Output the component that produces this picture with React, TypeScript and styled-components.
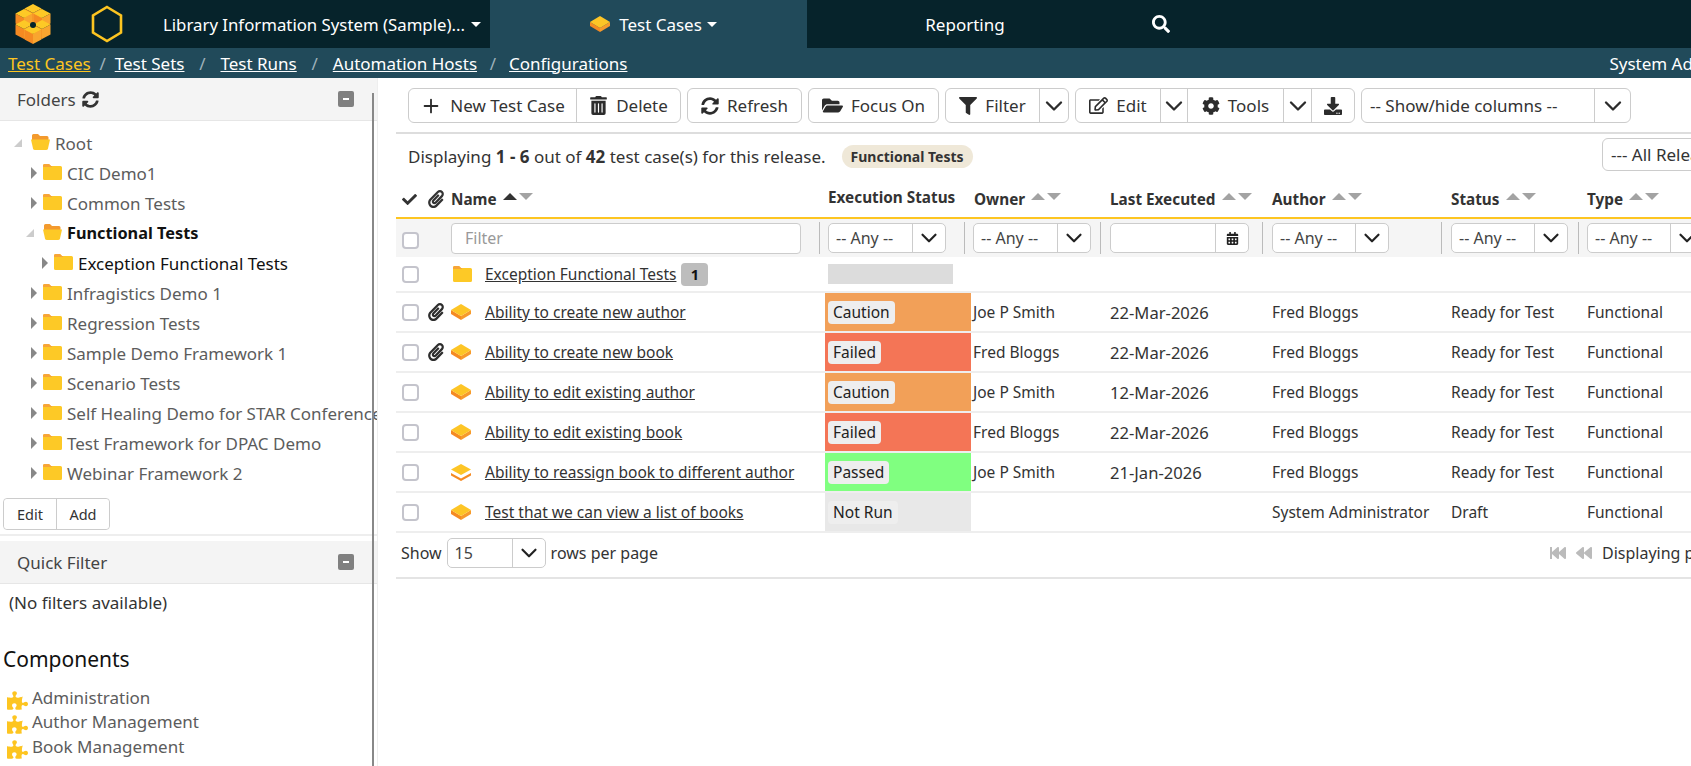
import React from 'react';
import styled, { createGlobalStyle } from 'styled-components';
import { ChevronDown, Plus } from 'lucide-react';
import {
  FaBackward,
  FaCalendarAlt,
  FaCheck,
  FaCog,
  FaDownload,
  FaFastBackward,
  FaFilter,
  FaFolderOpen,
  FaPaperclip,
  FaPuzzlePiece,
  FaRegEdit,
  FaSearch,
  FaSyncAlt,
  FaTrashAlt,
} from 'react-icons/fa';

const FONT = '"Noto Sans", "Open Sans", sans-serif';

const GlobalStyle = createGlobalStyle`
  html, body {
    margin: 0;
    padding: 0;
    height: 100%;
    overflow: hidden;
    background: #fff;
    font-family: ${FONT};
    font-size: 17px;
    color: #333;
  }
  * { box-sizing: border-box; }
`;

const Page = styled.div`
  width: 1691px;
  height: 766px;
  display: flex;
  flex-direction: column;
  overflow: hidden;
`;

/* top navigation */
const TopBar = styled.header`
  height: 48px;
  flex: none;
  display: flex;
  align-items: center;
  background: #06232b;
  color: #fff;
`;

const LogoSlot = styled.div`
  width: 91px;
  padding-left: 15px;
  display: flex;
  align-items: center;
`;

const HexSlot = styled.div`
  width: 72px;
  display: flex;
  align-items: center;
`;

const ProductName = styled.div`
  width: 327px;
  display: flex;
  align-items: center;
  gap: 6px;
  font-size: 16.8px;
  white-space: nowrap;
`;

const Caret = styled.span`
  display: inline-block;
  border-left: 5px solid transparent;
  border-right: 5px solid transparent;
  border-top: 5px solid #fff;
`;

const ActiveTab = styled.div`
  width: 317px;
  height: 48px;
  background: #214a5a;
  display: flex;
  align-items: center;
  justify-content: center;
  gap: 9px;
  padding-left: 10px;
`;

const TabCaret = styled(Caret)`
  margin-left: -4px;
`;

const PlainTab = styled.div`
  width: 316px;
  text-align: center;
`;

const SearchSlot = styled.div`
  margin-left: 29px;
  display: flex;
  font-size: 18px;
`;

/* breadcrumb style sub navigation */
const SubNav = styled.nav`
  height: 30px;
  flex: none;
  display: flex;
  align-items: center;
  background: #214a5a;
  padding-left: 8px;
  color: #fff;
  overflow: hidden;
  white-space: nowrap;
`;

const SubLink = styled.a<{ $active?: boolean }>`
  color: ${(p) => (p.$active ? '#fdc521' : '#fff')};
  text-decoration: underline;
`;

const Slash = styled.span<{ $w: number }>`
  width: ${(p) => p.$w}px;
  text-align: center;
  color: #9fb2ba;
`;

const UserName = styled.span`
  margin-left: auto;
  margin-right: -91px;
`;

const Body = styled.div`
  flex: 1;
  display: flex;
  min-height: 0;
`;

/* left column */
const Sidebar = styled.aside`
  width: 378px;
  flex: none;
  position: relative;
  border-right: 1px solid #eee;
  overflow: hidden;

  &::after {
    content: '';
    position: absolute;
    top: 15px;
    bottom: 0;
    left: 372px;
    width: 2px;
    background: #888;
  }
`;

const PanelHead = styled.div`
  height: 43px;
  display: flex;
  align-items: center;
  gap: 6px;
  padding: 0 23px 0 17px;
  background: #f4f4f4;
  border-bottom: 1px solid #e6e6e6;
  color: #444;
`;

const Collapse = styled.span`
  margin-left: auto;
  width: 16px;
  height: 16px;
  border-radius: 2px;
  background: #808080;
  display: flex;
  align-items: center;
  justify-content: center;

  &::before {
    content: '';
    width: 6px;
    height: 2px;
    background: #fff;
  }
`;

const Tree = styled.ul`
  list-style: none;
  margin: 0;
  padding: 7px 0 0;
`;

const TreeRow = styled.li<{ $indent: number; $bold?: boolean; $dark?: boolean }>`
  height: 30px;
  display: flex;
  align-items: center;
  padding-left: ${(p) => p.$indent}px;
  white-space: nowrap;
  font-weight: ${(p) => (p.$bold ? 700 : 400)};
  font-size: ${(p) => (p.$bold ? 16.3 : 17)}px;
  color: ${(p) => (p.$bold || p.$dark ? '#111' : '#5c5c5c')};
`;

const Twisty = styled.span<{ $open?: boolean }>`
  width: 17px;
  flex: none;
  display: flex;

  &::before {
    content: '';
    display: block;
    ${(p) =>
      p.$open
        ? `border-left: 8px solid transparent; border-bottom: 8px solid #ccc;`
        : `margin-left: 5px; border-top: 6px solid transparent; border-bottom: 6px solid transparent; border-left: 6px solid #888;`}
  }
`;

const TreeFolder = styled.span`
  display: flex;
  margin: -3px 5px 0 0;
`;

const TreeActions = styled.div`
  height: 48px;
  padding: 10px 0 0 3px;
  border-bottom: 2px solid #eee;
`;

const TreeButtons = styled.div`
  display: flex;
  width: 107px;
  height: 32px;
  border: 1px solid #ccc;
  border-radius: 4px;
`;

const TreeButton = styled.button`
  flex: 1;
  font: inherit;
  font-size: 14.5px;
  color: #333;
  background: #fff;
  border: 0;
  border-radius: 4px;
  padding: 0;

  & + & {
    border-left: 1px solid #ccc;
    border-radius: 0 4px 4px 0;
  }
`;

const QuickHead = styled(PanelHead)`
  margin-top: 5px;
`;

const NoFilters = styled.div`
  padding: 7px 9px 0;
  height: 59px;
  color: #333;
`;

const ComponentsTitle = styled.h3`
  margin: 0 0 10px 3px;
  font-weight: 400;
  font-size: 21px;
  line-height: 32px;
  color: #111;
`;

const ComponentItem = styled.div`
  height: 24.5px;
  display: flex;
  align-items: center;
  gap: 4px;
  padding-left: 7px;
  color: #5c5c5c;

  svg {
    color: #fdc521;
    margin-top: 6px;
    font-size: 21px;
  }
`;

/* main column */
const Main = styled.main`
  flex: 1;
  min-width: 0;
  overflow: hidden;
  padding-left: 18px;
`;

const Toolbar = styled.div`
  height: 56px;
  padding: 10px 0 0 12px;
  display: flex;
  gap: 6px;
  border-bottom: 2px solid #ddd;
  width: 1400px;
`;

const Group = styled.div`
  height: 35px;
  display: flex;
  border: 1px solid #ccc;
  border-radius: 6px;
  background: #fff;
`;

const ToolButton = styled.div<{ $w: number; $icon?: number }>`
  width: ${(p) => p.$w}px;
  display: flex;
  align-items: center;
  justify-content: center;
  gap: 8px;
  color: #333;
  white-space: nowrap;

  & + & {
    border-left: 1px solid #ccc;
  }

  svg {
    font-size: ${(p) => p.$icon ?? 18}px;
    color: #2c2c2c;
    flex: none;
  }
`;

const ColumnsText = styled.div`
  width: 233px;
  padding-left: 8px;
  display: flex;
  align-items: center;
  white-space: nowrap;
  border-right: 1px solid #ccc;
`;

const InfoLine = styled.div`
  height: 44px;
  display: flex;
  align-items: center;
  padding-left: 12px;
  white-space: nowrap;
  width: 1406px;
`;

const Chip = styled.span`
  margin-left: 16px;
  height: 23px;
  padding: 0 9px;
  display: flex;
  align-items: center;
  border-radius: 12px;
  background: #efe8d8;
  color: #333;
  font-weight: 700;
  font-size: 14px;
`;

const ReleaseBox = styled.div`
  margin-left: auto;
  width: 200px;
  height: 33px;
  margin-top: -4px;
  padding-left: 8px;
  display: flex;
  align-items: center;
  border: 1px solid #ccc;
  border-radius: 6px;
`;

const COLUMNS = '27px 25px 377px 146px 135px 162px 179px 136px 140px';

const HeadRow = styled.div`
  width: 1323px;
  height: 41px;
  padding-top: 3px;
  display: grid;
  grid-template-columns: ${COLUMNS};
  align-items: center;
  border-bottom: 2px solid #fdc521;
  font-weight: 700;
  font-size: 15.3px;
  color: #333;
  white-space: nowrap;
`;

const HeadCell = styled.div<{ $pad: number; $lift?: number }>`
  display: flex;
  align-items: center;
  gap: 3px;
  padding-left: ${(p) => p.$pad}px;
  margin-top: ${(p) => p.$lift ?? 0}px;
`;

const Sort = styled.span`
  display: inline-flex;
  gap: 2px;
  margin: -6px 0 0 3px;
`;

const SortArrow = styled.span<{ $up?: boolean; $on?: boolean }>`
  border-left: 7px solid transparent;
  border-right: 7px solid transparent;
  ${(p) => (p.$up ? 'border-bottom' : 'border-top')}: 7px solid ${(p) =>
    p.$on ? '#333' : '#a3a3a3'};
`;

const FilterRow = styled.div`
  width: 1323px;
  height: 38px;
  display: grid;
  grid-template-columns: 52px 372px 145px 136px 162px 179px 137px 150px;
  align-items: center;
  background: #f5f5f5;
`;

const FilterCell = styled.div<{ $pad: number; $last?: boolean }>`
  height: 32px;
  display: flex;
  align-items: center;
  padding-left: ${(p) => p.$pad}px;
  border-right: ${(p) => (p.$last ? 'none' : '1px solid #bbb')};
`;

const Tick = styled.input.attrs({ type: 'checkbox' })<{ $drop?: number }>`
  appearance: none;
  width: 17px;
  height: 17px;
  margin: ${(p) => p.$drop ?? 0}px 0 0 6px;
  background: #fff;
  border: 2px solid #c4c4cc;
  border-radius: 4px;
`;

const FilterInput = styled.div`
  width: 350px;
  height: 31px;
  padding-left: 13px;
  display: flex;
  align-items: center;
  background: #fff;
  border: 1px solid #ccc;
  border-radius: 4px;
  color: #999;
  font-size: 16px;
`;

const SelectBox = styled.div<{ $w: number }>`
  width: ${(p) => p.$w}px;
  height: 30px;
  display: flex;
  align-items: center;
  background: #fff;
  border: 1px solid #ccc;
  border-radius: 5px;
  font-size: 16px;
  color: #444;
  flex: none;
`;

const SelectText = styled.span`
  flex: 1;
  padding-left: 7px;
  white-space: nowrap;
`;

const SelectButton = styled.span`
  width: 33px;
  align-self: stretch;
  display: flex;
  align-items: center;
  justify-content: center;
  border-left: 1px solid #ccc;
  font-size: 13px;
  color: #222;
`;

const DataRow = styled.div<{ $h?: number }>`
  width: 1323px;
  height: ${(p) => p.$h ?? 40}px;
  display: grid;
  grid-template-columns: ${COLUMNS};
  align-items: center;
  border-bottom: 2px solid #eee;
  white-space: nowrap;
  color: #333;
  font-size: 15.5px;
`;

const AttachCell = styled.div`
  padding-left: 4px;
  display: flex;
  font-size: 18px;
  color: #2d2d2d;
`;

const NameCell = styled.div`
  display: flex;
  align-items: center;
  padding-left: 3px;
`;

const IconSlot = styled.span<{ $pad?: number }>`
  width: 34px;
  padding-left: ${(p) => p.$pad ?? 0}px;
  display: flex;
`;

const NameLink = styled.a`
  color: #333;
  text-decoration: underline;
`;

const Count = styled.span`
  margin-left: 5px;
  width: 27px;
  height: 23px;
  border-radius: 4px;
  background: #bdbdbd;
  display: flex;
  align-items: center;
  justify-content: center;
  font-weight: 700;
  font-size: 14.5px;
  color: #111;
`;

const STATUS_COLOURS: Record<string, string> = {
  Caution: '#f2a058',
  Failed: '#f47556',
  Passed: '#80ff80',
  'Not Run': '#e8e8e8',
};

const ExecCell = styled.div<{ $status: string }>`
  align-self: stretch;
  display: flex;
  align-items: center;
  padding-left: 3px;
  background: ${(p) => STATUS_COLOURS[p.$status]};
`;

const ExecBadge = styled.span`
  height: 23px;
  padding: 0 5px;
  display: flex;
  align-items: center;
  border-radius: 4px;
  background: #eee;
  color: #222;
`;

const EmptyBar = styled.div`
  margin-left: 3px;
  width: 125px;
  height: 20px;
  background: #dcdcdc;
`;

const TextCell = styled.div<{ $pad?: number; $size?: number }>`
  padding-left: ${(p) => p.$pad ?? 0}px;
  font-size: ${(p) => p.$size ?? 15.5}px;
`;

const Footer = styled.div`
  width: 1404px;
  height: 46px;
  padding: 0 0 4px 5px;
  display: flex;
  align-items: center;
  gap: 5px;
  border-bottom: 2px solid #e4e4e4;
  font-size: 16px;
`;

const Pager = styled.div`
  margin-left: auto;
  width: 250px;
  display: flex;
  align-items: center;
  gap: 10px;
  color: #333;
  white-space: nowrap;

  svg {
    color: #bbb;
    font-size: 16px;
    flex: none;
  }
`;

/* drawings */
const Cube = ({ x, y }: { x: number; y: number }) => (
  <g transform={`translate(${x} ${y})`}>
    <polygon points="-8.5,-4.5 0,0 0,10 -8.5,5.5" fill="#f58a22" />
    <polygon points="8.5,-4.5 0,0 0,10 8.5,5.5" fill="#f9a52f" />
    <polygon points="0,-9 8.5,-4.5 0,0 -8.5,-4.5" fill="#fdc926" />
  </g>
);

const Logo = () => (
  <svg width="38" height="42" viewBox="0 0 38 42">
    <Cube x={18} y={10} />
    <Cube x={9} y={15} />
    <Cube x={27} y={15} />
    <Cube x={9} y={26} />
    <Cube x={27} y={26} />
    <Cube x={18} y={31} />
    <circle cx="18" cy="22" r="3" fill="#06232b" />
  </svg>
);

const Hexagon = () => (
  <svg width="32" height="38" viewBox="0 0 32 38">
    <polygon
      points="16,2 30,10.5 30,27.5 16,36 2,27.5 2,10.5"
      fill="none"
      stroke="#fdc521"
      strokeWidth="2.6"
    />
  </svg>
);

const CaseIcon = () => (
  <svg width="20" height="16" viewBox="0 0 20 16">
    <polygon points="0,6 10,12 10,16 0,10" fill="#f58a22" />
    <polygon points="20,6 10,12 10,16 20,10" fill="#f79a2c" />
    <polygon points="10,0 20,6 10,12 0,6" fill="#fdc526" />
  </svg>
);

const PassedCaseIcon = () => (
  <svg width="20" height="17" viewBox="0 0 20 17">
    <polygon points="10,0 20,5.5 10,11 0,5.5" fill="#fdc526" />
    <polygon points="0,9 10,14.5 20,9 20,11.5 10,17 0,11.5" fill="#f58a22" />
  </svg>
);

const ClosedFolder = () => (
  <svg width="19" height="16" viewBox="0 0 19 16">
    <path d="M0 1.5 Q0 0 1.5 0 H6 L8 2 H17.5 Q19 2 19 3.5 V14.5 Q19 16 17.5 16 H1.5 Q0 16 0 14.5 Z" fill="#fdc926" />
    <path d="M0 3 V1.5 Q0 0 1.5 0 H6 L8 2 H9 V3 Z" fill="#f7a538" />
  </svg>
);

const OpenFolder = () => (
  <svg width="19" height="16" viewBox="0 0 19 16">
    <path d="M1 1.5 Q1 0 2.5 0 H7 L9 2 H16 Q17.5 2 17.5 3.5 V6 H1 Z" fill="#f39a2e" />
    <path d="M0 5.5 H19 L17 14.5 Q16.6 16 15 16 H4 Q2.4 16 2 14.5 Z" fill="#fdc926" />
  </svg>
);

const SortPair = ({ on }: { on?: boolean }) => (
  <Sort>
    <SortArrow $up $on={on} />
    <SortArrow />
  </Sort>
);

const Select = ({ w, text }: { w: number; text: string }) => (
  <SelectBox $w={w}>
    <SelectText>{text}</SelectText>
    <SelectButton>
      <ChevronDown size={26} strokeWidth={2} />
    </SelectButton>
  </SelectBox>
);

const Chevron = ({ w }: { w: number }) => (
  <ToolButton $w={w}>
    <ChevronDown size={28} strokeWidth={2} />
  </ToolButton>
);

const FOLDERS = [
  { label: 'CIC Demo1', indent: 26 },
  { label: 'Common Tests', indent: 26 },
  { label: 'Functional Tests', indent: 26, open: true, bold: true },
  { label: 'Exception Functional Tests', indent: 37, dark: true },
  { label: 'Infragistics Demo 1', indent: 26 },
  { label: 'Regression Tests', indent: 26 },
  { label: 'Sample Demo Framework 1', indent: 26 },
  { label: 'Scenario Tests', indent: 26 },
  { label: 'Self Healing Demo for STAR Conference', indent: 26 },
  { label: 'Test Framework for DPAC Demo', indent: 26 },
  { label: 'Webinar Framework 2', indent: 26 },
];

const CASES = [
  { name: 'Ability to create new author', clip: true, status: 'Caution', owner: 'Joe P Smith', date: '22-Mar-2026', author: 'Fred Bloggs', state: 'Ready for Test' },
  { name: 'Ability to create new book', clip: true, status: 'Failed', owner: 'Fred Bloggs', date: '22-Mar-2026', author: 'Fred Bloggs', state: 'Ready for Test' },
  { name: 'Ability to edit existing author', status: 'Caution', owner: 'Joe P Smith', date: '12-Mar-2026', author: 'Fred Bloggs', state: 'Ready for Test' },
  { name: 'Ability to edit existing book', status: 'Failed', owner: 'Fred Bloggs', date: '22-Mar-2026', author: 'Fred Bloggs', state: 'Ready for Test' },
  { name: 'Ability to reassign book to different author', status: 'Passed', owner: 'Joe P Smith', date: '21-Jan-2026', author: 'Fred Bloggs', state: 'Ready for Test', passed: true },
  { name: 'Test that we can view a list of books', status: 'Not Run', owner: '', date: '', author: 'System Administrator', state: 'Draft' },
];

export default function App() {
  return (
    <Page>
      <GlobalStyle />
      <TopBar>
        <LogoSlot>
          <Logo />
        </LogoSlot>
        <HexSlot>
          <Hexagon />
        </HexSlot>
        <ProductName>
          Library Information System (Sample)... <Caret />
        </ProductName>
        <ActiveTab>
          <CaseIcon />
          Test Cases
          <TabCaret />
        </ActiveTab>
        <PlainTab>Reporting</PlainTab>
        <SearchSlot>
          <FaSearch />
        </SearchSlot>
      </TopBar>

      <SubNav>
        <SubLink $active>Test Cases</SubLink>
        <Slash $w={24}>/</Slash>
        <SubLink>Test Sets</SubLink>
        <Slash $w={36}>/</Slash>
        <SubLink>Test Runs</SubLink>
        <Slash $w={36}>/</Slash>
        <SubLink>Automation Hosts</SubLink>
        <Slash $w={32}>/</Slash>
        <SubLink>Configurations</SubLink>
        <UserName>System Administrator</UserName>
      </SubNav>

      <Body>
        <Sidebar>
          <PanelHead>
            Folders <FaSyncAlt size={17} color="#333" />
            <Collapse />
          </PanelHead>
          <Tree>
            <TreeRow $indent={14}>
              <Twisty $open />
              <TreeFolder>
                <OpenFolder />
              </TreeFolder>
              Root
            </TreeRow>
            {FOLDERS.map((f) => (
              <TreeRow key={f.label} $indent={f.indent} $bold={f.bold} $dark={f.dark}>
                <Twisty $open={f.open} />
                <TreeFolder>{f.open ? <OpenFolder /> : <ClosedFolder />}</TreeFolder>
                {f.label}
              </TreeRow>
            ))}
          </Tree>
          <TreeActions>
            <TreeButtons>
              <TreeButton>Edit</TreeButton>
              <TreeButton>Add</TreeButton>
            </TreeButtons>
          </TreeActions>
          <QuickHead>
            Quick Filter
            <Collapse />
          </QuickHead>
          <NoFilters>(No filters available)</NoFilters>
          <ComponentsTitle>Components</ComponentsTitle>
          {['Administration', 'Author Management', 'Book Management'].map((c) => (
            <ComponentItem key={c}>
              <FaPuzzlePiece />
              {c}
            </ComponentItem>
          ))}
        </Sidebar>

        <Main>
          <Toolbar>
            <Group>
              <ToolButton $w={167}>
                <Plus size={22} strokeWidth={2} />
                New Test Case
              </ToolButton>
              <ToolButton $w={104} $icon={19}>
                <FaTrashAlt />
                Delete
              </ToolButton>
            </Group>
            <Group>
              <ToolButton $w={113}>
                <FaSyncAlt />
                Refresh
              </ToolButton>
            </Group>
            <Group>
              <ToolButton $w={129} $icon={21}>
                <FaFolderOpen />
                Focus On
              </ToolButton>
            </Group>
            <Group>
              <ToolButton $w={93}>
                <FaFilter />
                Filter
              </ToolButton>
              <Chevron w={29} />
            </Group>
            <Group>
              <ToolButton $w={84} $icon={19}>
                <FaRegEdit />
                Edit
              </ToolButton>
              <Chevron w={27} />
              <ToolButton $w={96}>
                <FaCog />
                Tools
              </ToolButton>
              <Chevron w={28} />
              <ToolButton $w={43}>
                <FaDownload />
              </ToolButton>
            </Group>
            <Group>
              <ColumnsText>-- Show/hide columns --</ColumnsText>
              <Chevron w={35} />
            </Group>
          </Toolbar>

          <InfoLine>
            <span>
              Displaying <b>1 - 6</b> out of <b>42</b> test case(s) for this release.
            </span>
            <Chip>Functional Tests</Chip>
            <ReleaseBox>--- All Releases ---</ReleaseBox>
          </InfoLine>

          <HeadRow>
            <HeadCell $pad={6}>
              <FaCheck size={15} />
            </HeadCell>
            <HeadCell $pad={4}>
              <FaPaperclip size={18} />
            </HeadCell>
            <HeadCell $pad={3}>
              Name <SortPair on />
            </HeadCell>
            <HeadCell $pad={3} $lift={-5}>
              Execution Status
            </HeadCell>
            <HeadCell $pad={3}>
              Owner <SortPair />
            </HeadCell>
            <HeadCell $pad={4}>
              Last Executed <SortPair />
            </HeadCell>
            <HeadCell $pad={4}>
              Author <SortPair />
            </HeadCell>
            <HeadCell $pad={4}>
              Status <SortPair />
            </HeadCell>
            <HeadCell $pad={4}>
              Type <SortPair />
            </HeadCell>
          </HeadRow>

          <FilterRow>
            <FilterCell $pad={0} $last>
              <Tick $drop={4} />
            </FilterCell>
            <FilterCell $pad={3}>
              <FilterInput>Filter</FilterInput>
            </FilterCell>
            <FilterCell $pad={8}>
              <Select w={118} text="-- Any --" />
            </FilterCell>
            <FilterCell $pad={8}>
              <Select w={118} text="-- Any --" />
            </FilterCell>
            <FilterCell $pad={9}>
              <SelectBox $w={139}>
                <SelectText />
                <SelectButton>
                  <FaCalendarAlt />
                </SelectButton>
              </SelectBox>
            </FilterCell>
            <FilterCell $pad={9}>
              <Select w={117} text="-- Any --" />
            </FilterCell>
            <FilterCell $pad={9}>
              <Select w={117} text="-- Any --" />
            </FilterCell>
            <FilterCell $pad={8} $last>
              <Select w={117} text="-- Any --" />
            </FilterCell>
          </FilterRow>

          <DataRow $h={36}>
            <Tick />
            <span />
            <NameCell>
              <IconSlot $pad={2}>
                <ClosedFolder />
              </IconSlot>
              <NameLink>Exception Functional Tests</NameLink>
              <Count>1</Count>
            </NameCell>
            <EmptyBar />
          </DataRow>

          {CASES.map((c) => (
            <DataRow key={c.name}>
              <Tick />
              <AttachCell>{c.clip && <FaPaperclip />}</AttachCell>
              <NameCell>
                <IconSlot>{c.passed ? <PassedCaseIcon /> : <CaseIcon />}</IconSlot>
                <NameLink>{c.name}</NameLink>
              </NameCell>
              <ExecCell $status={c.status}>
                <ExecBadge>{c.status}</ExecBadge>
              </ExecCell>
              <TextCell $pad={2}>{c.owner}</TextCell>
              <TextCell $pad={4} $size={16.6}>
                {c.date}
              </TextCell>
              <TextCell $pad={4}>{c.author}</TextCell>
              <TextCell $pad={4}>{c.state}</TextCell>
              <TextCell $pad={4}>Functional</TextCell>
            </DataRow>
          ))}

          <Footer>
            Show
            <Select w={99} text="15" />
            rows per page
            <Pager>
              <FaFastBackward />
              <FaBackward />
              Displaying page 1 of 1
            </Pager>
          </Footer>
        </Main>
      </Body>
    </Page>
  );
}
